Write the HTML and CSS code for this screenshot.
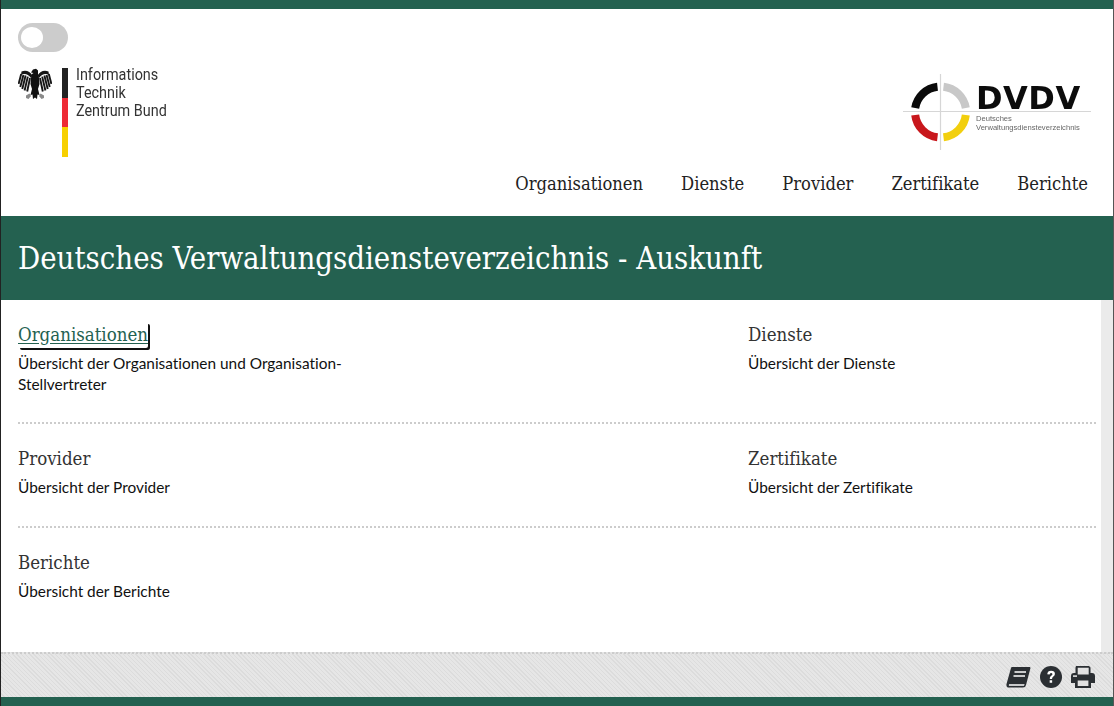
FILE: index.html
```html
<!DOCTYPE html>
<html lang="de">
<head>
<meta charset="utf-8">
<title>Deutsches Verwaltungsdiensteverzeichnis - Auskunft</title>
<link rel="stylesheet" href="styles.css">
</head>
<body>
<div class="page">
  <div class="topbar"></div>
  <header class="header">
    <div class="brand-col">
      <div class="toggle"><span class="knob"></span></div>
      <div class="itzb">
        <svg class="eagle" width="34" height="33" viewBox="0 0 34 33" aria-hidden="true">
          <defs>
            <g id="wing">
              <path d="M14.5 7.5 C12 3.5 8 1.5 3.5 3.5 L3 7 C6 5 10 5.5 13 10 Z" fill="#161616"/>
              <g stroke="#161616" stroke-width="1.9" fill="none" stroke-linecap="butt">
                <path d="M3.2 6 L.6 16"/>
                <path d="M5.4 7 L2.3 19"/>
                <path d="M7.6 7.6 L4.3 21"/>
                <path d="M9.8 8.6 L6.6 22.5"/>
                <path d="M12 10 L9.2 23.5"/>
              </g>
              <path d="M8 27.5 L11.5 25.5 L13 28 L10.5 31 L8 30 Z" fill="#8a8a8a"/>
            </g>
          </defs>
          <use href="#wing"/>
          <use href="#wing" transform="matrix(-1 0 0 1 34 0)"/>
          <path fill="#111" d="M13 4.5 L15 1.5 L18 .8 L20 2.5 L20 6 L21 10 L21.5 16 L20 21 L21.5 27 L19.5 26.5 L19 31 L17 29.5 L15 31 L14.5 26.5 L12.5 27 L14 21 L12.5 16 L13 10 L14 6 L15.5 5 Z"/>
        </svg>
        <div class="flag"><span class="f-black"></span><span class="f-red"></span><span class="f-gold"></span></div>
        <div class="itzb-text"><span>Informations</span><span>Technik</span><span>Zentrum Bund</span></div>
      </div>
    </div>
    <div class="right-col">
      <div class="dvdv">
        <svg class="dvdv-mark" width="192" height="82" viewBox="0 0 192 82" aria-hidden="true">
          <path d="M2 42.5 H190 M39.5 5 V81" stroke="#d6d6d6" stroke-width="1.2" fill="none"/>
          <path d="M14.2 39 A25.5 25.5 0 0 1 36.5 17.7" stroke="#0a0a0a" stroke-width="8" fill="none"/>
          <path d="M42.5 17.7 A25.5 25.5 0 0 1 64.8 39" stroke="#c8c8c8" stroke-width="8" fill="none"/>
          <path d="M14.2 46 A25.5 25.5 0 0 0 36.5 68.3" stroke="#c8171c" stroke-width="8" fill="none"/>
          <path d="M42.5 68.3 A25.5 25.5 0 0 0 64.8 46" stroke="#f2cf0e" stroke-width="8" fill="none"/>
        </svg>
        <div class="dvdv-title">DVDV</div>
        <div class="dvdv-sub">Deutsches<br>Verwaltungsdiensteverzeichnis</div>
      </div>
      <nav class="nav">
        <a>Organisationen</a><a>Dienste</a><a>Provider</a><a>Zertifikate</a><a>Berichte</a>
      </nav>
    </div>
  </header>
  <div class="banner"><h1>Deutsches Verwaltungsdiensteverzeichnis - Auskunft</h1></div>
  <div class="middle">
    <main class="content">
      <section class="row first">
        <div class="item">
          <h2><a class="focus">Organisationen</a></h2>
          <p>Übersicht der Organisationen und Organisation-Stellvertreter</p>
        </div>
        <div class="item">
          <h2>Dienste</h2>
          <p>Übersicht der Dienste</p>
        </div>
      </section>
      <section class="row">
        <div class="item">
          <h2>Provider</h2>
          <p>Übersicht der Provider</p>
        </div>
        <div class="item">
          <h2>Zertifikate</h2>
          <p>Übersicht der Zertifikate</p>
        </div>
      </section>
      <section class="row last">
        <div class="item">
          <h2>Berichte</h2>
          <p>Übersicht der Berichte</p>
        </div>
      </section>
    </main>
    <div class="track"></div>
  </div>
  <footer class="footer">
    <svg width="25" height="23" viewBox="0 0 25 23" aria-hidden="true">
      <path fill="#2b2f33" d="M6 1 H24 L24.5 2 L20 19 Q19.5 21.5 17 21.5 H3 Q0 21.5 .5 18 L5 2 Q5.3 1 6 1 Z"/>
      <path fill="#fff" d="M3.2 18.2 H18.6 L18 19.8 H3.2 Q2.4 19 3.2 18.2 Z"/>
      <path stroke="#fff" stroke-width="1.6" d="M8.5 6 H20 M7.5 10 H19"/>
    </svg>
    <svg width="22" height="22" viewBox="0 0 23 23" aria-hidden="true">
      <circle cx="11.5" cy="11.5" r="11.5" fill="#2b2f33"/>
      <path d="M7.6 8.6 Q7.8 5 11.6 5 Q15.6 5 15.6 8.4 Q15.6 10.2 13.7 11.3 Q12.5 12 12.6 13.6 H10.2 Q10 11.2 11.7 10.1 Q13 9.3 13 8.5 Q13 7.3 11.5 7.3 Q10.2 7.3 10 8.9 Z M10.1 15 H12.7 V17.6 H10.1 Z" fill="#fff"/>
    </svg>
    <svg width="24" height="23" viewBox="0 0 24 23" aria-hidden="true">
      <path fill="#2b2f33" d="M5 0 H18 L19.5 1.5 V7 H21 Q24 7 24 10 V17 H20 V22 H4 V17 H0 V10 Q0 7 3 7 H4.5 V1.5 Z"/>
      <path fill="#e2e2e2" d="M6.7 1.8 H17.7 V8.5 H6.7 Z M6.7 14.5 H17.4 V20 H6.7 Z"/>
      <rect x="2" y="9.3" width="4" height="1.6" fill="#e2e2e2"/>
    </svg>
  </footer>
  <div class="bottombar"></div>
</div>
</body>
</html>
```
FILE: styles.css
```css
* { box-sizing: border-box; }
html, body { margin: 0; padding: 0; height: 100%; overflow: hidden; background: #fff; }
.page {
  width: 1114px;
  height: 706px;
  display: flex;
  flex-direction: column;
  border-left: 1px solid #222;
  border-right: 1px solid #555;
  font-family: "Lato", "Noto Sans", sans-serif;
  font-variant-ligatures: none;
  color: #111;
}
.topbar { height: 9px; background: #246150; flex: none; }
.bottombar { height: 9px; background: #246150; flex: none; }
.header {
  height: 207px;
  flex: none;
  display: flex;
  justify-content: space-between;
  padding: 14px 25px 0 17px;
  background: #fff;
}
.toggle {
  width: 50px;
  height: 29px;
  border-radius: 15px;
  background: #ccc;
  padding: 4px 0 0 3px;
}
.knob { display: block; width: 22px; height: 21px; border-radius: 50%; background: #fff; }
.itzb { display: flex; margin-top: 16px; }
.eagle { flex: none; }
.flag { width: 6px; height: 89px; margin-left: 10px; display: flex; flex-direction: column; flex: none; }
.flag span { flex: 1; }
.f-black { background: #222; }
.f-red { background: #ee2a35; }
.f-gold { background: #f7d000; }
.itzb-text {
  display: flex;
  flex-direction: column;
  margin: -2px 0 0 8px;
  font-family: "Roboto", sans-serif;
  font-size: 16px;
  line-height: 17.8px;
  color: #333;
  transform: scaleX(.9);
  transform-origin: left top;
}
.itzb-text span { display: block; white-space: nowrap; }
.right-col { display: flex; flex-direction: column; align-items: flex-end; }
.dvdv { position: relative; width: 192px; height: 82px; margin-top: 46px; margin-right: -5px; filter: blur(.4px); }
.dvdv-mark { display: block; }
.dvdv-title {
  position: absolute;
  left: 75px;
  top: 13px;
  font-family: "DejaVu Sans", sans-serif;
  font-weight: 700;
  font-size: 32px;
  line-height: 32px;
  letter-spacing: .5px;
  color: #0c0c0c;
}
.dvdv-sub {
  position: absolute;
  left: 75px;
  top: 45px;
  font-family: "Liberation Sans", sans-serif;
  font-size: 7.6px;
  line-height: 9px;
  color: #666;
  white-space: nowrap;
}
.nav { display: flex; gap: 38px; margin-top: 20px; }
.nav a {
  font-family: "DejaVu Serif Condensed", "DejaVu Serif", serif;
  font-stretch: condensed;
  font-size: 18.2px;
  line-height: 26px;
  color: #222;
}
.banner {
  height: 84px;
  flex: none;
  background: #246150;
  display: flex;
  align-items: center;
  padding-left: 17px;
}
.banner h1 {
  margin: 0;
  font-family: "DejaVu Serif Condensed", "DejaVu Serif", serif;
  font-stretch: condensed;
  font-weight: 400;
  font-size: 30.8px;
  color: #fff;
}
.middle { flex: 1; display: flex; min-height: 0; }
.content { flex: 1; padding: 0 5px 0 17px; }
.track { width: 12px; background: #ebebeb; flex: none; }
.row {
  display: grid;
  grid-template-columns: 730px 1fr;
  height: 104px;
  padding-top: 22px;
  border-bottom: 2px dotted #ccc;
}
.row.first { height: 124px; }
.row.last { border-bottom: 0; }
.item { width: 340px; }
.item h2 {
  margin: 0;
  font-family: "DejaVu Serif Condensed", "DejaVu Serif", serif;
  font-stretch: condensed;
  font-weight: 400;
  font-size: 18.5px;
  line-height: 26px;
  color: #333;
}
.focus {
  color: #246150;
  text-decoration: underline;
  text-underline-offset: 2px;
  display: inline-block;
  border-radius: 2px;
  box-shadow: 2px 2px 0 #111;
}
.item p {
  margin: 5px 0 0;
  font-size: 15.4px;
  line-height: 21px;
  color: #111;
}
.footer {
  height: 45px;
  flex: none;
  display: flex;
  justify-content: flex-end;
  align-items: center;
  gap: 9px;
  padding: 3px 18px 0 0;
  border-top: 2px dotted #ccc;
  background: repeating-linear-gradient(45deg, #e6e6e6 0, #e6e6e6 2px, #dcdcdc 2px, #dcdcdc 3px);
}
```
